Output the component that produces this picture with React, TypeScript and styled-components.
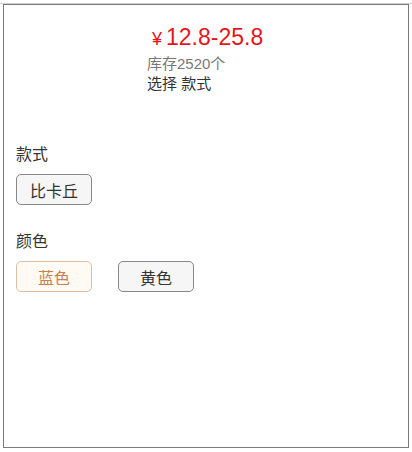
import styled, { createGlobalStyle } from "styled-components";

const GlobalStyle = createGlobalStyle`
  body {
    margin: 0;
    background: #fff;
    font-family: "Liberation Sans", "Noto Sans CJK SC", sans-serif;
  }
`;

const Frame = styled.div`
  margin-top: 3px;
  border-top: 1px solid #cfcfcf;
  height: 448px;
`;

const Box = styled.div`
  margin-left: 3px;
  width: 404px;
  height: 442px;
  border: 1px solid #7b7b7b;
  box-sizing: content-box;
`;

const Header = styled.div`
  padding: 17px 0 0 143px;
`;

const PriceLine = styled.div`
  display: flex;
  align-items: baseline;
  color: #e5161d;
  height: 30px;
  line-height: 30px;
`;

const Yen = styled.span`
  font-size: 18px;
  margin: 0 4px 0 5px;
`;

const Price = styled.span`
  font-size: 23px;
`;

const InfoLine = styled.div<{ $muted?: boolean }>`
  font-size: 15px;
  line-height: 20px;
  color: ${(p) => (p.$muted ? "#787878" : "#333")};
`;

const Stock = styled(InfoLine)`
  margin-top: 2px;
`;

const Section = styled.div<{ $top: number }>`
  padding-left: 12px;
  margin-top: ${(p) => p.$top}px;
`;

const Label = styled.div`
  font-size: 16px;
  line-height: 22px;
  color: #333;
`;

const Options = styled.div`
  display: flex;
  gap: 26px;
  margin-top: 8px;
`;

const Option = styled.button<{ $active?: boolean }>`
  width: 76px;
  height: 31px;
  box-sizing: border-box;
  border-radius: 5px;
  font-family: "Liberation Sans", "Noto Sans CJK SC", sans-serif;
  font-size: 16px;
  padding: 0;
  cursor: pointer;
  border: 1px solid ${(p) => (p.$active ? "#dcbfa3" : "#888")};
  background: ${(p) => (p.$active ? "#fffaf4" : "#f6f6f6")};
  color: ${(p) => (p.$active ? "#c4824f" : "#333")};
`;

const groups = [
  { name: "款式", top: 50, options: [{ label: "比卡丘", active: false }] },
  {
    name: "颜色",
    top: 26,
    options: [
      { label: "蓝色", active: true },
      { label: "黄色", active: false },
    ],
  },
];

export default function App() {
  return (
    <>
      <GlobalStyle />
      <Frame>
        <Box>
          <Header>
            <PriceLine>
              <Yen>¥</Yen>
              <Price>12.8-25.8</Price>
            </PriceLine>
            <Stock $muted>库存2520个</Stock>
            <InfoLine>选择 款式</InfoLine>
          </Header>
          {groups.map((g) => (
            <Section key={g.name} $top={g.top}>
              <Label>{g.name}</Label>
              <Options>
                {g.options.map((o) => (
                  <Option key={o.label} $active={o.active}>
                    {o.label}
                  </Option>
                ))}
              </Options>
            </Section>
          ))}
        </Box>
      </Frame>
    </>
  );
}
